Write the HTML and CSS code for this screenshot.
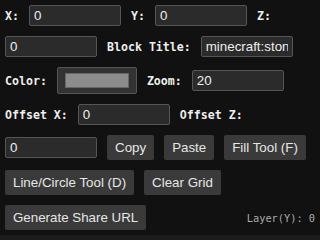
FILE: index.html
```html
<!DOCTYPE html>
<html>
<head>
    <title>Block Grid</title>
    <link rel="stylesheet" href="styles.css">
</head>
<body>
    <div class="controls">
        <label for="posX">X:</label>
        <input type="text" id="posX" value="0">
        <label for="posY">Y:</label>
        <input type="text" id="posY" value="0">
        <label for="posZ">Z:</label>
        <input type="text" id="posZ" value="0">

        <label for="blockTitle">Block Title:</label>
        <input type="text" id="blockTitle" value="minecraft:stone">

        <label for="color">Color:</label>
        <input type="color" id="color" value="#8c8c8c">
        <label for="zoom">Zoom:</label>
        <input type="text" id="zoom" value="20">

        <label for="offsetX">Offset X:</label>
        <input type="text" id="offsetX" value="0">
        <label for="offsetZ">Offset Z:</label>
        <input type="text" id="offsetZ" value="0">

        <button>Copy</button>
        <button>Paste</button>
        <button>Fill Tool (F)</button>
        <button>Line/Circle Tool (D)</button>
        <button>Clear Grid</button>
        <button>Generate Share URL</button>

        <span class="layer-info">Layer(Y): 0</span>
    </div>
    <div class="grid-area"></div>
</body>
</html>
```
FILE: styles.css
```css
body {
    margin: 0;
    padding: 0;
    background-color: #1c1c1c;
    font-family: "Liberation Sans", Arial, sans-serif;
}

.controls {
    display: flex;
    flex-wrap: wrap;
    align-items: center;
    gap: 10px;
    padding: 5px;
    background-color: #111;
}

.controls label {
    font-family: "DejaVu Sans Mono", monospace;
    font-weight: bold;
    font-size: 11.6px;
    color: #eee;
}

.controls input[type="text"] {
    width: 92px;
    height: 21px;
    box-sizing: border-box;
    padding: 1px 4px;
    border: 1px solid #555;
    border-radius: 2px;
    background-color: #2b2b2b;
    color: #eee;
    font-family: "Liberation Sans", Arial, sans-serif;
    font-size: 13.33px;
}

.controls input[type="color"] {
    width: 80px;
    height: 27px;
    box-sizing: border-box;
    padding: 0;
    border: 1px solid #555;
    border-radius: 2px;
    background-color: #333;
}

.controls input[type="color"]::-webkit-color-swatch-wrapper {
    padding: 5px 7px;
}

.controls input[type="color"]::-webkit-color-swatch {
    border: 1px solid #666;
    border-radius: 0;
}

.controls button {
    height: 25px;
    padding: 0 8px;
    border: none;
    border-radius: 2px;
    background-color: #3a3a3a;
    color: #e6e6e6;
    font-family: "Liberation Sans", Arial, sans-serif;
    font-size: 13.33px;
}

.layer-info {
    margin-left: auto;
    font-family: "DejaVu Sans Mono", monospace;
    font-size: 10.3px;
    color: #aaa;
}

.grid-area {
    height: 200px;
    background-color: #1c1c1c;
}
```
